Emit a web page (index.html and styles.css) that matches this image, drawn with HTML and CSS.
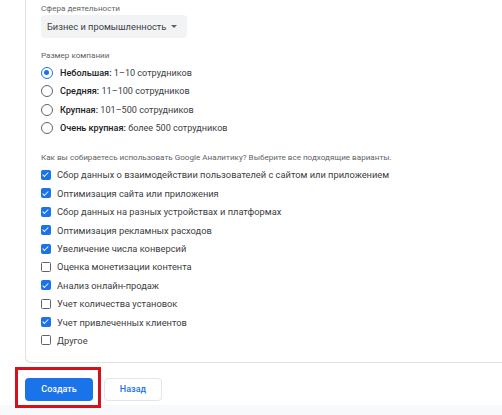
FILE: index.html
```html
<!DOCTYPE html>
<html lang="ru">
<head>
<meta charset="utf-8">
<link rel="stylesheet" href="styles.css">
</head>
<body>
<div class="card">
  <div class="label">Сфера деятельности</div>
  <div class="select"><span>Бизнес и промышленность</span><span class="caret"></span></div>
  <div class="label label-gap">Размер компании</div>
  <div class="list radios">
    <div class="row"><span class="radio on"></span><span><b>Небольшая:</b> 1–10 сотрудников</span></div>
    <div class="row"><span class="radio"></span><span><b>Средняя:</b> 11–100 сотрудников</span></div>
    <div class="row"><span class="radio"></span><span><b>Крупная:</b> 101–500 сотрудников</span></div>
    <div class="row"><span class="radio"></span><span><b>Очень крупная:</b> более 500 сотрудников</span></div>
  </div>
  <div class="label label-gap2">Как вы собираетесь использовать Google Аналитику? Выберите все подходящие варианты.</div>
  <div class="list checks">
    <div class="row"><span class="cb on"></span><span>Сбор данных о взаимодействии пользователей с сайтом или приложением</span></div>
    <div class="row"><span class="cb on"></span><span>Оптимизация сайта или приложения</span></div>
    <div class="row"><span class="cb on"></span><span>Сбор данных на разных устройствах и платформах</span></div>
    <div class="row"><span class="cb on"></span><span>Оптимизация рекламных расходов</span></div>
    <div class="row"><span class="cb on"></span><span>Увеличение числа конверсий</span></div>
    <div class="row"><span class="cb"></span><span>Оценка монетизации контента</span></div>
    <div class="row"><span class="cb on"></span><span>Анализ онлайн-продаж</span></div>
    <div class="row"><span class="cb"></span><span>Учет количества установок</span></div>
    <div class="row"><span class="cb on"></span><span>Учет привлеченных клиентов</span></div>
    <div class="row"><span class="cb"></span><span>Другое</span></div>
  </div>
</div>
<div class="actions">
  <span class="highlight"><button class="btn primary">Создать</button></span>
  <button class="btn secondary">Назад</button>
</div>
<div class="footer"></div>
</body>
</html>
```
FILE: styles.css
```css
html, body {
  margin: 0;
  padding: 0;
  background: #fff;
  overflow: hidden;
}
body {
  font-family: Roboto, "Noto Sans", Arial, sans-serif;
  color: #3c4043;
  width: 502px;
  height: 415px;
}
.card {
  margin-left: 25px;
  border: 1px solid #e0e0e0;
  border-top: none;
  border-right: none;
  border-radius: 0 0 0 6px;
  padding: 2px 0 12px 15px;
}
.label {
  font-size: 8.1px;
  line-height: 12px;
  height: 12px;
  color: #5f6368;
  white-space: nowrap;
}
.label-gap { margin-top: 11px; }
.label-gap2 { margin-top: 13.6px; }
.select {
  margin-top: 1px;
  width: 146px;
  height: 23px;
  box-sizing: border-box;
  background: #f1f3f4;
  border-radius: 4px;
  padding-left: 6px;
  display: flex;
  align-items: center;
  gap: 4px;
  font-size: 9.3px;
  color: #3c4043;
  white-space: nowrap;
}
.caret {
  width: 0;
  height: 0;
  border-left: 3px solid transparent;
  border-right: 3px solid transparent;
  border-top: 3px solid #5f6368;
  margin-left: 1px;
}
.list { margin-top: 2.8px; }
.row {
  height: 18.4px;
  display: flex;
  align-items: center;
  font-size: 9.3px;
  color: #3c4043;
  white-space: nowrap;
}
.row b { font-weight: 500; color: #202124; }
.radios .row { gap: 7px; font-size: 9.1px; }
.checks .row { gap: 6px; }
.radio {
  width: 12px;
  height: 12px;
  box-sizing: border-box;
  border: 1.5px solid #5f6368;
  border-radius: 50%;
  flex: none;
  position: relative;
}
.radio.on { border-color: #1a73e8; }
.radio.on::after {
  content: "";
  position: absolute;
  left: 1.75px;
  top: 1.75px;
  width: 5.5px;
  height: 5.5px;
  border-radius: 50%;
  background: #1a73e8;
}
.cb {
  width: 10px;
  height: 10px;
  box-sizing: border-box;
  border: 1.5px solid #5f6368;
  border-radius: 1.5px;
  flex: none;
  position: relative;
}
.cb.on {
  background: #1a73e8;
  border-color: #1a73e8;
}
.cb.on::after {
  content: "";
  position: absolute;
  left: 2.2px;
  top: 0.3px;
  width: 2.2px;
  height: 4.8px;
  border: solid #fff;
  border-width: 0 1.3px 1.3px 0;
  transform: rotate(45deg);
}
.actions {
  margin-top: 15px;
  margin-left: 25px;
  display: flex;
  gap: 11px;
  height: 23px;
}
.highlight {
  position: relative;
  display: flex;
  z-index: 2;
}
.highlight::before {
  content: "";
  position: absolute;
  left: -10px;
  top: -11px;
  right: -8px;
  bottom: -7px;
  border: 3.5px solid #d5121b;
  pointer-events: none;
}
.btn {
  font-family: Roboto, "Noto Sans", Arial, sans-serif;
  font-size: 9px;
  font-weight: 500;
  border-radius: 4px;
  height: 23px;
  padding: 0;
  cursor: pointer;
}
.primary {
  width: 68px;
  background: #1a73e8;
  color: #fff;
  border: none;
}
.secondary {
  width: 58px;
  background: #fff;
  color: #1a73e8;
  border: 1px solid #e3e5e8;
}
.footer {
  margin-top: 4px;
  height: 10px;
  background: #f8f9fa;
}
```
